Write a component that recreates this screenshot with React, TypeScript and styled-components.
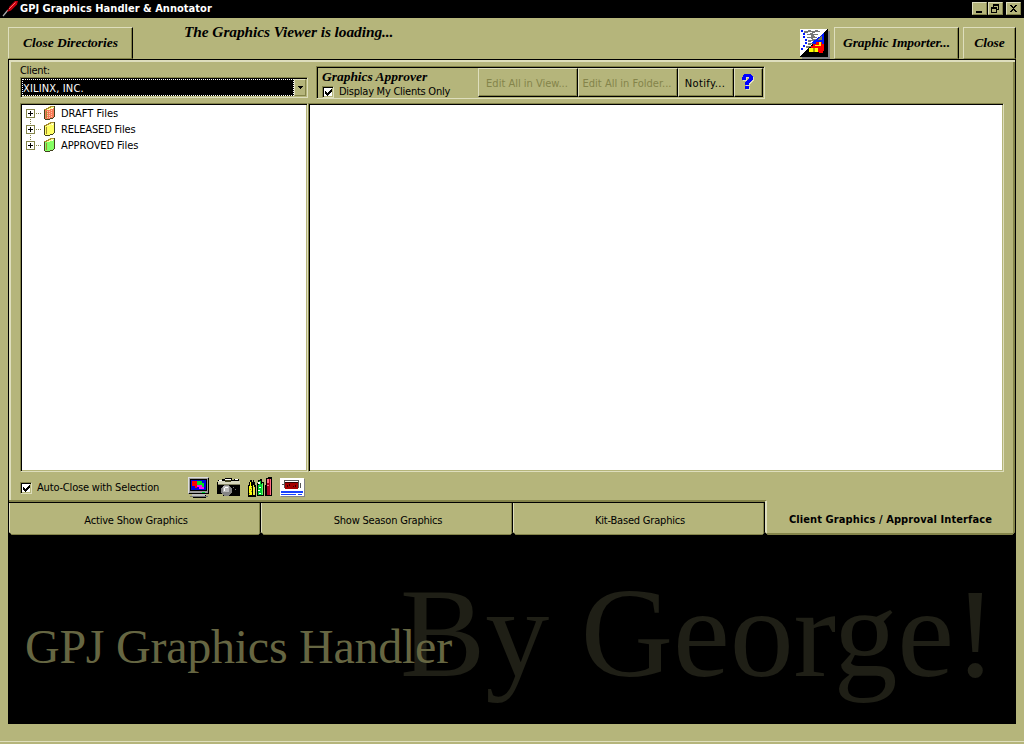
import React from "react";
import styled, { createGlobalStyle, css } from "styled-components";

const face = "#b5b57b";
const light = "#dedebd";
const shade = "#84844a";

const Global = createGlobalStyle`
  * { box-sizing: border-box; }
  body { margin: 0; background: ${face}; overflow: hidden; }
`;

const sans = css`
  font-family: "DejaVu Sans Condensed", "DejaVu Sans", sans-serif;
  font-stretch: condensed;
  font-size: 11px;
  line-height: 14px;
  letter-spacing: -0.2px;
  white-space: pre;
`;
const script = css`
  font-family: "Liberation Serif", serif;
  font-style: italic;
  font-weight: bold;
  white-space: pre;
`;

const Window = styled.div`
  width: 1024px;
  height: 744px;
  background: ${face};
  color: #000;
  display: flex;
  flex-direction: column;
  ${sans}
`;
const TitleBar = styled.header`
  height: 18px;
  background: #000;
  color: #fff;
  display: flex;
  padding: 0 3px 0 2px;
`;
const Title = styled.h1`
  margin: 2px 0 0 2px;
  flex: 1;
  font-size: 11px;
  line-height: 14px;
  font-weight: bold;
  letter-spacing: 0.03px;
`;
const CaptionButtons = styled.div`
  display: flex;
  padding-top: 2px;
`;
const CaptionButton = styled.button<{ $gap?: number }>`
  width: 15px;
  height: 13px;
  padding: 0;
  margin-left: ${(p) => p.$gap ?? 0}px;
  background: ${face};
  border: 1px solid;
  border-color: ${light} ${shade} ${shade} ${light};
  display: block;
  svg { display: block; }
`;
const Header = styled.div`
  height: 41px;
  padding: 9px 8px 0;
  display: flex;
`;
const HeaderButton = styled.button<{ $w: number; $gap?: number }>`
  ${script}
  width: ${(p) => p.$w}px;
  height: 32px;
  padding: 0;
  margin-left: ${(p) => p.$gap ?? 0}px;
  font-size: 13.5px;
  letter-spacing: -0.05px;
  color: #000;
  background: ${face};
  border: 1px solid;
  border-color: ${light} #000 ${shade} ${light};
  box-shadow: inset -1px 0 ${shade};
`;
const Status = styled.div`
  ${script}
  flex: 1;
  font-size: 15.4px;
  line-height: 18px;
  letter-spacing: -0.07px;
  padding-left: 51px;
  margin-top: -4px;
`;
const Panel = styled.main`
  width: 1008px;
  height: 444px;
  margin-left: 8px;
  border: 1px solid #000;
  border-bottom: 0;
  box-shadow: inset 2px 2px ${light}, inset -2px 0 ${shade};
  padding: 4px 11px 0;
  display: flex;
  flex-direction: column;
`;
const ToolRow = styled.div`
  display: flex;
  height: 39px;
`;
const ClientField = styled.div`
  width: 288px;
  display: flex;
  flex-direction: column;
`;
const Label = styled.label<{ $track?: number; $drop?: number }>`
  padding-top: ${(p) => p.$drop ?? 0}px;
  letter-spacing: ${(p) => p.$track ?? -0.25}px;
`;
const sunken = css`
  border: 1px solid;
  border-color: ${shade} ${light} ${light} ${shade};
  box-shadow: inset 1px 1px #000, inset -1px -1px ${face};
`;
const Combo = styled.div`
  ${sunken}
  height: 21px;
  margin-top: -1px;
  background: #fff;
  padding: 1px;
  display: flex;
`;
const ComboValue = styled.div`
  flex: 1;
  background: #000;
  color: #fff;
  border: 1px dotted #fff;
  line-height: 17px;
  letter-spacing: 0.15px;
`;
const DropButton = styled.div`
  width: 12px;
  background: ${face};
  border: 1px solid;
  border-color: ${light} ${shade} ${shade} ${light};
  display: flex;
  align-items: center;
  justify-content: center;
`;
const Approver = styled.section`
  width: 449px;
  height: 33px;
  margin: 2px 0 0 8px;
  border: 1px solid;
  border-color: ${shade} ${light} ${light} ${shade};
  box-shadow: inset 1px 1px #000;
  padding: 1px 0 0 5px;
  display: flex;
`;
const ApproverInfo = styled.div`
  width: 156px;
  padding-top: 1px;
`;
const ApproverTitle = styled.div`
  ${script}
  font-size: 13.5px;
  line-height: 15px;
  height: 15px;
  letter-spacing: -0.03px;
`;
const CheckRow = styled.div`
  display: flex;
  align-items: center;
  gap: 5px;
`;
const CheckBox = styled.span`
  width: 12px;
  height: 12px;
  background: #fff;
  ${sunken}
  svg { display: block; }
`;
const ToolButton = styled.button<{ $w: number; $track?: number }>`
  ${sans}
  width: ${(p) => p.$w}px;
  height: 29px;
  padding: 3px 2px 0 0;
  letter-spacing: ${(p) => p.$track ?? 0}px;
  background: ${face};
  color: #000;
  border: 1px solid;
  border-color: ${light} #000 #000 ${light};
  box-shadow: inset -1px -1px ${shade};
  display: flex;
  align-items: center;
  justify-content: center;
  &:disabled { color: ${shade}; }
`;
const HelpButton = styled(ToolButton)`
  padding: 0 1px 1px 0;
`;
const Views = styled.div`
  display: flex;
  height: 369px;
  flex-shrink: 0;
`;
const Pane = styled.div<{ $w: number }>`
  ${sunken}
  width: ${(p) => p.$w}px;
  background: #fff;
  padding: 1px 0 0 5px;
`;
const TreeRow = styled.div`
  height: 16px;
  display: flex;
  align-items: center;
`;
const TreeLabel = styled.span<{ $track: number }>`
  margin-left: 6px;
  padding-top: 2px;
  letter-spacing: ${(p) => p.$track}px;
`;
const Footer = styled.div`
  height: 31px;
  display: flex;
  align-items: center;
`;
const FooterCheck = styled.div`
  width: 168px;
`;
const Icons = styled.div`
  display: flex;
  gap: 7px;
`;
const Tabs = styled.nav`
  width: 1008px;
  height: 32px;
  margin-left: 8px;
  background: #000;
  display: flex;
  padding-left: 1px;
`;
const Tab = styled.div`
  width: 252px;
  height: 32px;
  padding: 4px 0 0 2px;
  background: ${face};
  border-left: 1px solid ${light};
  border-right: 1px solid #000;
  border-bottom: 1px solid ${shade};
  letter-spacing: -0.2px;
  box-shadow: inset -1px 0 ${shade};
  clip-path: polygon(0 0, 100% 0, 100% calc(100% - 3px), calc(100% - 3px) 100%, 3px 100%, 0 calc(100% - 3px));
  display: flex;
  align-items: center;
  justify-content: center;
`;
const ActiveTab = styled(Tab)`
  width: 250px;
  height: 34px;
  margin-top: -2px;
  padding: 5px 0 0 1px;
  border-left: 2px solid ${light};
  border-right: 2px solid ${shade};
  border-bottom: 2px solid ${shade};
  box-shadow: none;
  font-weight: bold;
  letter-spacing: 0.1px;
`;
const TabEdge = styled.div`
  width: 757px;
  height: 3px;
  margin: -3px 0 0 9px;
  border-top: 2px solid ${shade};
  border-bottom: 1px solid #000;
`;
const Stage = styled.div`
  height: 189px;
  margin: 0 8px;
  background: #000;
  display: grid;
  overflow: hidden;
`;
const Wordmark = styled.div<{ $size: number; $x: number; $y: number; $tone: string; $track: number }>`
  grid-area: 1 / 1;
  font-family: "Liberation Serif", serif;
  font-size: ${(p) => p.$size}px;
  line-height: 1;
  color: ${(p) => p.$tone};
  letter-spacing: ${(p) => p.$track}px;
  padding: ${(p) => p.$y}px 0 0 ${(p) => p.$x}px;
`;
const StatusLine = styled.div`
  margin-top: 17px;
  height: 1px;
  background: ${light};
`;

const Check = () => (
  <svg width="10" height="10" shapeRendering="crispEdges">
    <path d="M2 4h1v3h-1zM3 5h1v3h-1zM4 6h1v3h-1zM5 5h1v3h-1zM6 4h1v3h-1zM7 3h1v3h-1zM8 2h1v3h-1z" />
  </svg>
);
const Pen = () => (
  <svg width="16" height="18">
    <path d="M1 16L6 10" stroke="#aaa" strokeWidth="1.2" />
    <path d="M5 12L7.5 6.5L13 1L16 1L15 4.5L9 10.5Z" fill="#c60010" />
    <path d="M7 9L13.5 2.5" stroke="#ff6b6b" strokeWidth="1" />
  </svg>
);
const Book = ({ fill, checked }: { fill: string; checked?: boolean }) => (
  <svg width="11" height="16" shapeRendering="crispEdges">
    <path d="M1 5h2v-1h6v-1h1v9h-1v1h-3v1h-5z" fill={fill} />
    {checked && (
      <path d="M3.5 6v8M5.5 6v8M7.5 5v8" stroke="#ffc6a5" strokeWidth="1" strokeDasharray="1 1" />
    )}
    <path d="M3 3h1v-1h1v-1h3v1h1v1h-1v1h-2v1h-3z" fill="#ffff9c" />
    <path d="M10 1h1v11h-1zM0 5h1v9h-1zM1 14h5v1h-5zM6 13h3v1h-3zM9 12h1v1h-1z" fill="#42421d" />
    <path d="M0 4h2v-1h2v-1h2v-1h4v1h-3v1h-2v1h-2v1h-3zM2 6h1v7h-1z" fill="#a58c31" />
    <path d="M8 2h2v1h-2zM5 3h3v1h-3z" fill="#ffff9c" />
  </svg>
);
const Expander = ({ first, last }: { first?: boolean; last?: boolean }) => (
  <svg width="18" height="16" shapeRendering="crispEdges">
    <path d="M.5 4.5h8v8h-8z" fill="#fff" stroke={shade} />
    <path d="M2 8h5v1h-5zM4 6h1v5h-1z" />
    <path d="M10 8h1v1h-1zM12 8h1v1h-1zM14 8h1v1h-1z" fill={shade} />
    {!first && <path d="M4 0h1v1h-1zM4 2h1v1h-1z" fill={shade} />}
    {!last && <path d="M4 14h1v1h-1z" fill={shade} />}
  </svg>
);
const Monitor = () => (
  <svg width="22" height="22" shapeRendering="crispEdges">
    <path d="M0 0h21v17h-21z" fill="#9c9c9c" />
    <path d="M0 0h20v1h-19v15h-1z" fill="#dedede" />
    <path d="M20 1h1v16h-20v-1h19zM2 2h17v12h-17z" />
    <path d="M3 3h15v10h-15z" fill="#0000e0" />
    <path d="M4 4h5v7h-2v-2h-3z" fill="#f00" />
    <path d="M9 4h5v2h2v4h-2v-2h-5z" fill="#00e020" />
    <path d="M9 8h5v2h2v2h-5v-2h-2z" fill="#f0f" />
    <path d="M4 17h14v2h-14z" fill="#bdbdbd" />
    <path d="M2 19h18v1h-18z" fill="#737373" />
    <path d="M5 20h13v1h-13zM17 18h1v1h-1z" />
    <path d="M14 15h3v1h-3z" fill="#0d3" />
  </svg>
);
const Camera = () => (
  <svg width="24" height="22" shapeRendering="crispEdges">
    <path d="M0 5h1v-2h4v-1h3v-1h7v2h2v-1h5v2h1v15h-17v-2h-6z" />
    <path d="M1 4h22v3h-22z" fill="#d6d6bd" />
    <path d="M2 3h3v1h-3zM8 2h6v1h-6zM18 2h3v1h-3z" fill="#fff" />
    <path d="M8 3h6v2h-6z" fill="#424221" />
    <path d="M1 7h22v1h-22z" fill="#848463" />
    <circle cx="9.5" cy="13.5" r="5.5" fill="#848484" />
    <circle cx="9" cy="12" r="3.5" fill="#bdbdbd" />
    <path d="M8 10h3v1h-3zM7 11h1v3h-1z" fill="#fff" />
    <path d="M16 10h1v1h-1zM18 12h1v1h-1z" fill="#777" />
  </svg>
);
const Crayons = () => (
  <svg width="25" height="22" shapeRendering="crispEdges">
    <path d="M0 8h1v-3h1v-2h2v2h1v-2h1v2h1v3h1v12h-8zM9 6h1v-3h2v-1h2v3h2v14h-7zM17 8h1v-7h2v-1h4v19h-7z" />
    <path d="M1 9h1v-4h1v4h1v9h-3z" fill="#ff0" />
    <path d="M3 10h1v1h-1zM2 12h1v1h-1zM3 14h1v1h-1zM1 16h1v1h-1z" fill="#84844a" />
    <path d="M5 8h1v2h1v8h-2z" fill="#e7e742" />
    <path d="M10 8h1v-4h2v3h1v11h-4z" fill="#00c931" />
    <path d="M10 5h2v2h-2zM11 10h2v1h-2zM10 13h2v1h-2zM11 16h2v1h-2z" fill="#fff" />
    <path d="M14 6h1v12h-1z" fill="#63ff63" />
    <path d="M19 2h3v16h-3z" fill="#a50021" />
    <path d="M19 2h2v4h-2zM19 8h2v1h-2zM22 2h1v16h-1z" fill="#ff6b84" />
  </svg>
);
const Stamp = () => (
  <svg width="25" height="22" shapeRendering="crispEdges">
    <path d="M1 2h24v18h-24z" fill="#848484" />
    <path d="M0 1h24v18h-24z" fill="#fff" />
    <path d="M4 3h15v1h-15zM4 3h1v8h-1zM18 3h1v8h-1zM20 6h1v5h-1zM2 7h2v1h-2z" fill="#555" />
    <path d="M5 5h13v7h-13z" fill="#a50000" />
    <path d="M5 5h13v1h-13zM7 8h1v2h-1zM9 7h1v2h-1zM13 9h1v1h-1zM15 8h1v2h-1z" fill="#300" />
    <path d="M1 14h22v2h-22z" fill="#1842ff" />
    <path d="M1 17h15v1h-15zM18 17h4v1h-4z" fill="#1842ff" />
  </svg>
);
const ImporterIcon = () => (
  <svg width="30" height="32" shapeRendering="crispEdges">
    <path d="M2 4h28v28h-28z" fill="#848484" />
    <path d="M0 2h28v28h-28z" />
    <path d="M0 2h27l-27 27z" fill="#fff" />
    <path d="M24 6v11h-14z" fill="#0018ff" />
    <path d="M22 8v5h-5z" fill="#84844a" />
    <path d="M1 3h2v2h-2zM3 6h2v2h-2zM3 9h2v2h-2zM5 12h2v2h-2zM5 15h2v2h-2zM3 18h2v2h-2zM1 21h2v2h-2z" fill="#0018ff" />
    <path d="M4 4h4v-1h3v1h4v-1h3v1h2v1h-5v1h-3v-1h-4v1h-4zM7 7h3v-1h3v1h5v1h-4v1h-3v-1h-4zM7 10h4v-1h4v1h2v1h-4v1h-2v-1h-4zM8 13h4v-1h4v1h-2v1h-3v1h-3zM8 16h5v1h-2v1h-3zM6 19h5v1h-2v1h-3z" fill="#777" />
    <path d="M9 21h2v-2h2v-2h3v-2h6v2h2v7h-1v2h-4v-1h-10z" fill="#f00" />
    <path d="M15 18h4v-3h2v4h-6zM9 21h4v4h-4zM15 21h3v4h-3z" fill="#ff0" />
    <path d="M13 21h2v4h-2z" fill="#a5a500" />
  </svg>
);
const helpHook = "M0 3h1v-2h1v-1h7v1h1v1h1v4h-1v1h-1v1h-1v1h-1v2h-4v-3h1v-1h1v-1h1v-1h1v-2h-3v3h-4zM3 12h4v3h-4z";
const Help = () => (
  <svg width="12" height="16" shapeRendering="crispEdges">
    <path d={helpHook} fill={light} transform="translate(1 1)" />
    <path d={helpHook} fill="#00f" />
  </svg>
);

const tree = [
  { name: "DRAFT Files", fill: "#f77b5a", track: 0 },
  { name: "RELEASED Files", fill: "#ffff63", track: -0.15 },
  { name: "APPROVED Files", fill: "#84ff63", track: -0.1 },
];
const tabs = ["Active Show Graphics", "Show Season Graphics", "Kit-Based Graphics"];

export default function App() {
  return (
    <Window>
      <Global />
      <TitleBar>
        <Pen />
        <Title>GPJ Graphics Handler &amp; Annotator</Title>
        <CaptionButtons>
          <CaptionButton aria-label="Minimize">
            <svg width="13" height="11" shapeRendering="crispEdges"><path d="M3 8h6v2h-6z" /></svg>
          </CaptionButton>
          <CaptionButton aria-label="Restore" $gap={1}>
            <svg width="13" height="11" shapeRendering="crispEdges">
              <path d="M4 1h6v6h-2v-1h1v-3h-4v1h-1zM2 4h6v6h-6zM3 6v3h4v-3z" fillRule="evenodd" />
            </svg>
          </CaptionButton>
          <CaptionButton aria-label="Close window" $gap={3}>
            <svg width="13" height="11" shapeRendering="crispEdges">
              <path d="M3 2h2v1h1v1h1v-1h1v-1h2v1h-1v1h-1v1h-1v1h1v1h1v1h1v1h-2v-1h-1v-1h-1v1h-1v1h-2v-1h1v-1h1v-1h1v-1h-1v-1h-1v-1h-1z" />
            </svg>
          </CaptionButton>
        </CaptionButtons>
      </TitleBar>
      <Header>
        <HeaderButton $w={125}>Close Directories</HeaderButton>
        <Status>The Graphics Viewer is loading...</Status>
        <ImporterIcon />
        <HeaderButton $w={125} $gap={4}>Graphic Importer...</HeaderButton>
        <HeaderButton $w={53} $gap={4}>Close</HeaderButton>
      </Header>
      <Panel>
        <ToolRow>
          <ClientField>
            <Label $track={-0.3}>Client:</Label>
            <Combo>
              <ComboValue>XILINX, INC.</ComboValue>
              <DropButton>
                <svg width="5" height="3" shapeRendering="crispEdges"><path d="M0 0h5v1h-1v1h-1v1h-1v-1h-1v-1h-1z" /></svg>
              </DropButton>
            </Combo>
          </ClientField>
          <Approver>
            <ApproverInfo>
              <ApproverTitle>Graphics Approver</ApproverTitle>
              <CheckRow>
                <CheckBox><Check /></CheckBox>
                <Label $drop={1}>Display My Clients Only</Label>
              </CheckRow>
            </ApproverInfo>
            <ToolButton $w={100} disabled>Edit All in View...</ToolButton>
            <ToolButton $w={100} disabled>Edit All in Folder...</ToolButton>
            <ToolButton $w={56} $track={0.4}>Notify...</ToolButton>
            <HelpButton $w={29} aria-label="Help"><Help /></HelpButton>
          </Approver>
        </ToolRow>
        <Views>
          <Pane $w={288}>
            {tree.map((n, i) => (
              <TreeRow key={n.name}>
                <Expander first={i === 0} last={i === 2} />
                <Book fill={n.fill} checked={i === 0} />
                <TreeLabel $track={n.track}>{n.name}</TreeLabel>
              </TreeRow>
            ))}
          </Pane>
          <Pane $w={696} />
        </Views>
        <Footer>
          <FooterCheck>
            <CheckRow>
              <CheckBox><Check /></CheckBox>
              <Label $track={-0.18}>Auto-Close with Selection</Label>
            </CheckRow>
          </FooterCheck>
          <Icons>
            <Monitor />
            <Camera />
            <Crayons />
            <Stamp />
          </Icons>
        </Footer>
      </Panel>
      <TabEdge />
      <Tabs>
        {tabs.map((t) => (
          <Tab key={t}>{t}</Tab>
        ))}
        <ActiveTab>Client Graphics / Approval Interface</ActiveTab>
      </Tabs>
      <Stage>
        <Wordmark $size={128} $x={392} $y={34} $tone="#1f1f16" $track={-0.2}>By George!</Wordmark>
        <Wordmark $size={48} $x={17} $y={88} $tone="#666642" $track={-0.25}>GPJ Graphics Handler</Wordmark>
      </Stage>
      <StatusLine />
    </Window>
  );
}
